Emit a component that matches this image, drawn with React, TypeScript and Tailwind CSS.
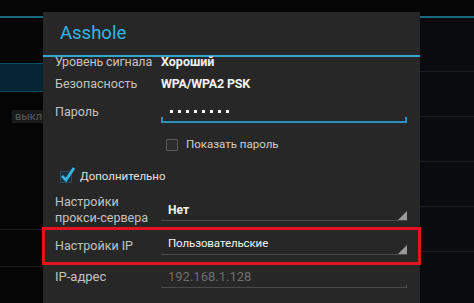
import React from 'react';

const font = { fontFamily: 'Roboto, "Noto Sans", "Liberation Sans", sans-serif' };

function Triangle() {
    return (
        <svg className="absolute right-0 bottom-0" width="9" height="9" viewBox="0 0 9 9">
            <polygon points="9,0 9,9 0,9" fill="#9a9a9a" />
        </svg>
    );
}

function Dots() {
    return (
        <div className="flex gap-[5px]">
            {Array.from({ length: 8 }).map((_, i) => (
                <span key={i} className="block w-[3px] h-[3px] bg-white" />
            ))}
        </div>
    );
}

export default function App() {
    return (
        <div className="relative w-[474px] h-[303px] overflow-hidden bg-[#050505]" style={font}>
            {/* Background screen */}
            <div className="h-[16px]" />
            <div className="h-[2px] bg-[#1a6580]" />
            <div className="flex h-[285px]">
                <div className="w-[70px] flex flex-col">
                    <div className="mt-[45px] h-[29px] bg-[#062433] border border-[#0c4a62] border-l-0" />
                    <div className="mt-[11px] ml-[12px]">
                        <span className="bg-[#1a1a1a] px-[3px] text-[11px] leading-[13px] text-[#585858]">выкл</span>
                    </div>
                    <div className="mt-[102px] border-b border-[#1b1b1b]" />
                    <div className="mt-[36px] border-b border-[#1b1b1b]" />
                </div>
                <div className="flex-1" />
                <div className="w-[60px] bg-[#0a0b0d] pt-[9px]">
                    <div className="h-[45px] border-b border-[#1a1c1f]" />
                    <div className="h-[45px] border-b border-[#1a1c1f]" />
                    <div className="h-[45px] border-b border-[#1a1c1f]" />
                    <div className="h-[45px] border-b border-[#1a1c1f]" />
                    <div className="h-[45px] border-b border-[#1a1c1f]" />
                </div>
            </div>

            {/* Dialog */}
            <div className="absolute left-[43px] top-[12px] w-[377px] h-[291px] bg-[#272727] flex flex-col">
                <div className="h-[43px] flex items-center pl-[17px] text-[18.5px] text-[#33b5e5]">Asshole</div>
                <div className="h-[2px] bg-[#2fa6d3]" />

                <div className="h-[11px] flex items-center pl-[12px] pr-[13px]">
                    <div className="w-[106px] text-[12.5px] tracking-[-0.15px] text-[#c2c2c2] whitespace-nowrap">Уровень сигнала</div>
                    <div className="text-[12.5px] font-bold text-[#f2f2f2]">Хороший</div>
                </div>
                <div className="h-[33px] flex items-center pl-[12px] pr-[13px]">
                    <div className="w-[106px] text-[12.5px] text-[#c2c2c2]">Безопасность</div>
                    <div className="text-[12.5px] font-bold tracking-[-0.2px] text-[#f2f2f2]">WPA/WPA2 PSK</div>
                </div>
                <div className="h-[22px] flex items-center pl-[12px] pr-[13px]">
                    <div className="w-[106px] text-[12.5px] text-[#c2c2c2]">Пароль</div>
                    <div className="relative flex-1 h-[22px] flex items-center pl-[9px] border-b-2 border-[#2b93bb]">
                        <Dots />
                        <span className="absolute left-0 bottom-0 w-[2px] h-[4px] bg-[#2b93bb]" />
                        <span className="absolute right-0 bottom-0 w-[2px] h-[4px] bg-[#2b93bb]" />
                    </div>
                </div>
                <div className="h-[44px] flex items-center pl-[123px]">
                    <span className="w-[12px] h-[12px] border border-[#5a5a5a] bg-[#2c2c2c] rounded-[1px]" />
                    <span className="ml-[8px] text-[11.5px] text-[#d0d0d0]">Показать пароль</span>
                </div>
                <div className="h-[20px] flex items-center pl-[17px]">
                    <span className="relative w-[12px] h-[12px] bg-[#18303e] border border-[#2c4a5a]">
                        <svg className="absolute -left-[1px] -top-[6px]" width="16" height="17" viewBox="0 0 16 17">
                            <path d="M2 10 L6 14 L14 2" stroke="#33b5e5" strokeWidth="2.8" fill="none" />
                        </svg>
                    </span>
                    <span className="ml-[8px] text-[11.5px] text-[#e0e0e0]">Дополнительно</span>
                </div>
                <div className="h-[40px] flex pl-[12px] pr-[13px]">
                    <div className="w-[106px] self-end pb-[1px] text-[12.5px] leading-[16px] text-[#c2c2c2]">
                        Настройки<br />прокси-сервера
                    </div>
                    <div className="relative flex-1 mt-[13px] h-[21px] flex items-center pl-[7px] border-b border-[#4a4a4a]">
                        <span className="text-[12px] font-bold text-[#f2f2f2]">Нет</span>
                        <Triangle />
                    </div>
                </div>
                <div className="-mx-px h-[38px] flex items-center border-[3px] border-[#e3141f] pl-[10px] pr-[11px]">
                    <div className="w-[106px] text-[12.5px] text-[#c2c2c2]">Настройки IP</div>
                    <div className="relative flex-1 self-start mt-[4px] h-[21px] flex items-center pl-[7px] border-b border-[#4a4a4a]">
                        <span className="text-[11.5px] tracking-[-0.1px] text-[#f2f2f2]">Пользовательские</span>
                        <Triangle />
                    </div>
                </div>
                <div className="h-[24px] flex items-center pl-[12px] pr-[13px]">
                    <div className="w-[106px] text-[13px] text-[#c2c2c2]">IP-адрес</div>
                    <div className="relative flex-1 h-[22px] flex items-center pl-[7px] border-b border-[#4a4a4a]">
                        <span className="text-[13px] text-[#6e6e6e]">192.168.1.128</span>
                        <span className="absolute right-0 bottom-0 w-px h-[3px] bg-[#4a4a4a]" />
                    </div>
                </div>
            </div>
        </div>
    );
}
